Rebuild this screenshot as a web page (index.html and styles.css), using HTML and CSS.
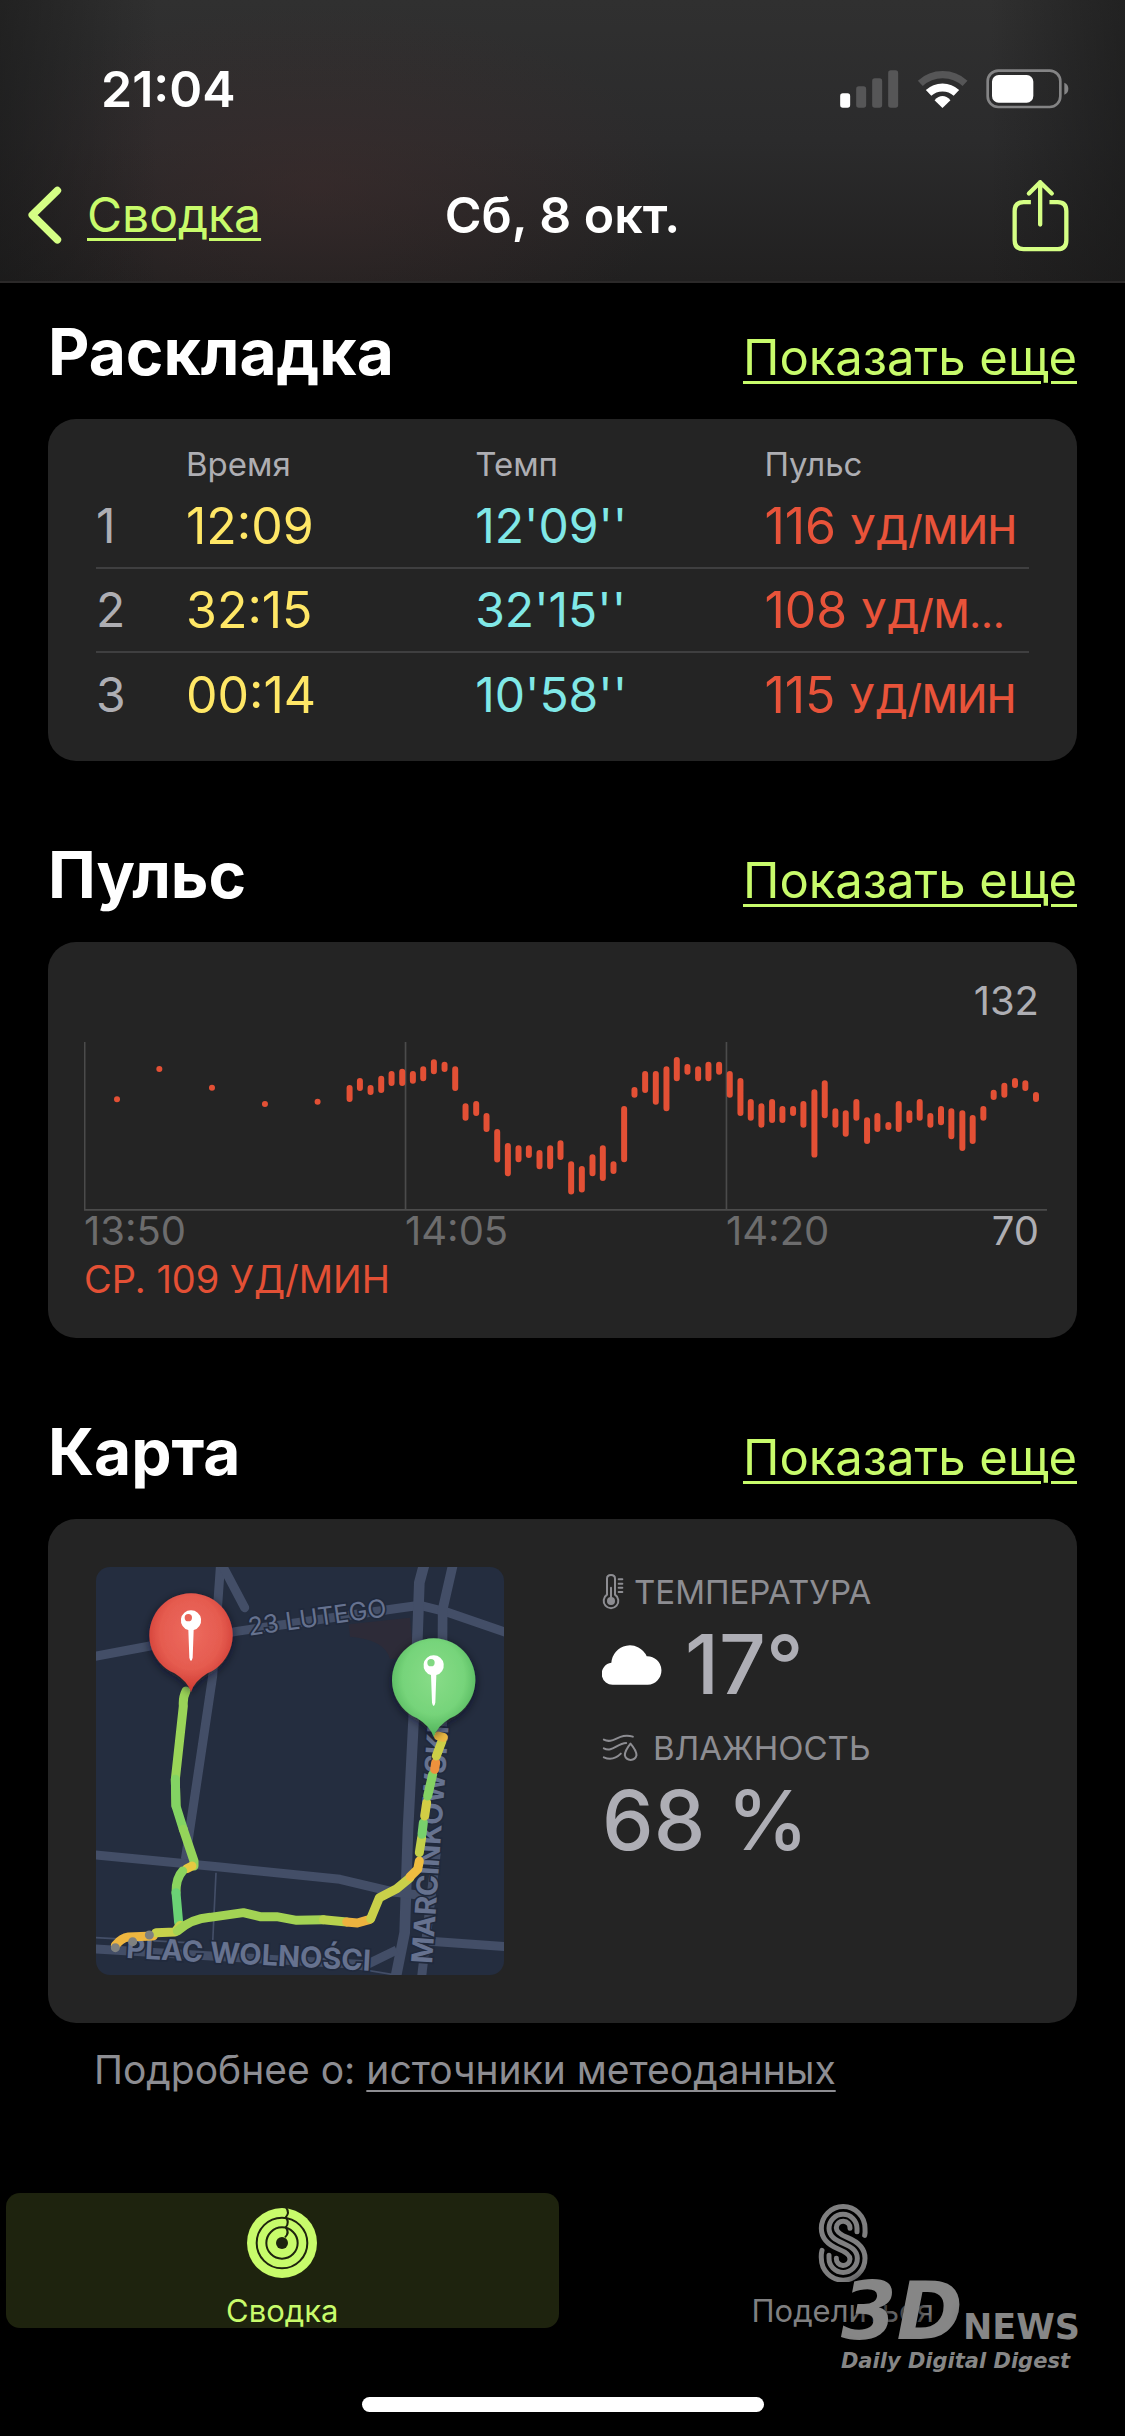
FILE: index.html
```html
<!DOCTYPE html>
<html lang="ru">
<head>
  <meta charset="utf-8">
  <meta name="viewport" content="width=device-width, initial-scale=1">
  <title>Сб, 8 окт.</title>
  <link rel="stylesheet" href="styles.css">
</head>
<body>
  <header class="header">
    <div class="status">
      <span class="status-time">21:04</span>
      <div class="status-icons">
        <svg class="icon-signal" viewBox="60 58 176 114" aria-hidden="true">
          <rect x="60" y="128" width="30" height="43" rx="8" fill="#fff"/>
          <g fill="#565657">
            <rect x="108" y="107" width="30" height="64" rx="8"/>
            <rect x="156" y="83" width="30" height="88" rx="8"/>
            <rect x="204" y="59" width="30" height="112" rx="8"/>
          </g>
        </svg>
        <svg class="icon-wifi" viewBox="290 58 154 114" aria-hidden="true">
          <g fill="none">
            <path d="M300 98A100 100 0 0 1 435 98" stroke="#565657" stroke-width="22"/>
            <path d="M325 127A61 61 0 0 1 409 127" stroke="#fff" stroke-width="24"/>
          </g>
          <path d="M367 172L343 149Q367 124 391 149Z" fill="#fff"/>
        </svg>
        <svg class="icon-battery" viewBox="500 56 249 120" aria-hidden="true">
          <rect x="505" y="61" width="218" height="109" rx="32" fill="none" stroke="#848485" stroke-width="8"/>
          <rect x="518" y="74" width="124" height="83" rx="20" fill="#fff"/>
          <path d="M735 97Q747 102 747 115Q747 128 735 133Z" fill="#848485"/>
        </svg>
      </div>
    </div>
    <nav class="nav">
      <a class="back" href="#summary">
        <svg class="icon-back" viewBox="50 410 106 174" aria-hidden="true">
          <path d="M142 423L66 497L142 572" fill="none" stroke="currentColor" stroke-width="23" stroke-linecap="round" stroke-linejoin="round"/>
        </svg>
        <span class="back-text">Сводка</span>
      </a>
      <h1 class="nav-title">Сб, 8 окт.</h1>
      <button class="share" type="button" aria-label="Поделиться">
        <svg class="icon-share" viewBox="575 382 172 219" aria-hidden="true">
          <g fill="none" stroke="currentColor" stroke-width="13">
            <path d="M632 451H610Q583 451 583 478V566Q583 593 610 593H713Q739 593 739 566V478Q739 451 713 451H688"/>
            <path d="M660 519V391M626 425L660 391L695 425" stroke-linecap="round" stroke-linejoin="round"/>
          </g>
        </svg>
      </button>
    </nav>
  </header>

  <main class="content">
    <section class="section">
      <div class="section-head">
        <h2 class="section-title">Раскладка</h2>
        <a class="more" href="#splits">Показать еще</a>
      </div>
      <div class="card card-splits">
        <table class="splits">
          <thead>
            <tr><th class="col-num"></th><th class="col-wide">Время</th><th class="col-wide">Темп</th><th>Пульс</th></tr>
          </thead>
          <tbody>
            <tr><td class="num">1</td><td class="time">12:09</td><td class="pace">12'09''</td><td class="pulse">116 <span class="unit">уд/мин</span></td></tr>
            <tr><td class="num">2</td><td class="time">32:15</td><td class="pace">32'15''</td><td class="pulse">108 <span class="unit">уд/м…</span></td></tr>
            <tr><td class="num">3</td><td class="time">00:14</td><td class="pace">10'58''</td><td class="pulse">115 <span class="unit">уд/мин</span></td></tr>
          </tbody>
        </table>
      </div>
    </section>

    <section class="section">
      <div class="section-head">
        <h2 class="section-title">Пульс</h2>
        <a class="more" href="#pulse">Показать еще</a>
      </div>
      <div class="card card-pulse">
        <div class="chart-max">132</div>
        <svg class="chart" viewBox="40 33 2890 507" role="img" aria-label="Пульс">
          <g fill="none" stroke="#4b4b4b" stroke-width="5">
            <path d="M42 33V537H2930M1005 33V537M1968 33V537"/>
          </g>
          <g fill="none" stroke="#e35035" stroke-width="18" stroke-linecap="round">
            <path d="M139 205h.1M266 114h.1M424 170h.1M583 219h.1M741 212h.1"/>
            <path d="M837 171V204M868 150V171M900 171V183M932 143V177M963 129V156M995 122V156M1027 129V149M1058 115V142M1090 94V121M1122 101V114M1154 115V171M1185 226V260M1217 219V246M1248 255V294M1280 303V386M1312 345V427M1344 352V385M1375 352V372M1407 366V406M1439 352V406M1470 337V378"/>
            <path d="M1502 400V482M1534 414V476M1566 379V427M1597 352V441M1629 400V420M1661 234V385M1692 177V191M1724 129V177M1756 129V212M1788 115V232M1819 87V142M1851 108V122M1883 115V142M1914 101V142M1946 101V122M1978 129V191M2010 150V246M2041 213V260M2073 226V281M2105 213V267M2136 234V267M2168 234V246M2199 219V281"/>
            <path d="M2232 184V371M2263 157V253M2295 241V281M2326 247V308M2358 213V260M2390 268V330M2421 255V294M2454 282V288M2485 219V294M2517 247V267M2548 213V260M2580 255V281M2612 234V274M2643 241V316M2676 247V351M2707 261V330M2739 234V260M2770 185V198M2802 164V191M2834 150V162M2865 157V171M2897 192V204"/>
          </g>
        </svg>
        <div class="axis">
          <span>13:50</span>
          <span>14:05</span>
          <span class="axis-last">14:20 <span class="chart-min">70</span></span>
        </div>
        <div class="average">СР. 109 УД/МИН</div>
      </div>
    </section>

    <section class="section">
      <div class="section-head">
        <h2 class="section-title">Карта</h2>
        <a class="more" href="#map">Показать еще</a>
      </div>
      <div class="card card-map">
        <svg class="map" viewBox="48 53 1224 1224" role="img" aria-label="Маршрут">
          <defs>
            <radialGradient id="pin-red" cx=".5" cy=".4" r=".62"><stop offset="0" stop-color="#ed6b5f"/><stop offset=".6" stop-color="#e55b4f"/><stop offset="1" stop-color="#cb352d"/></radialGradient>
            <radialGradient id="pin-green" cx=".5" cy=".4" r=".62"><stop offset="0" stop-color="#88dc88"/><stop offset=".6" stop-color="#76d47a"/><stop offset="1" stop-color="#4aad55"/></radialGradient>
            <filter id="pin-shadow" x="-30%" y="-30%" width="160%" height="160%"><feDropShadow dx="0" dy="8" stdDeviation="14" flood-color="#0c111c" flood-opacity=".65"/></filter>
            <path id="pin" d="M333 428Q323 396 284 372A125 125 0 1 1 382 372Q343 396 333 428Z"/>
            <g id="needle"><path fill="#fff" fill-rule="evenodd" d="M333 183A30 30 0 0 1 341 242L338 325Q333 345 328 325L325 242A30 30 0 0 1 333 183ZM325 194A11 11 0 1 0 325 216A11 11 0 1 0 325 194Z"/></g>
          </defs>
          <rect x="48" y="53" width="1224" height="1224" fill="#242d3f"/>
          <path d="M806 225L990 205L1000 320L930 330Q915 270 810 262Z" fill="#2d2b38"/>
          <g fill="none" stroke="#434e67" stroke-width="27" stroke-linejoin="round">
            <path d="M30 324L210 290L470 246L960 176L1020 168L1100 188L1280 250"/>
            <path d="M422 40L398 380L316 930"/>
            <path d="M428 50L494 175" stroke-linecap="round"/>
            <path d="M1034 40L1018 100L1010 330L984 840L974 1150L948 1280" stroke-width="32"/>
            <path d="M1120 40L1088 180L1086 560" stroke-width="29"/>
            <path d="M30 915L420 953L780 990L940 1028L1040 1040"/>
            <path d="M30 1198L480 1225L860 1246L950 1202"/>
            <path d="M1040 1175L1280 1192"/>
            <path d="M1070 900L1024 1290"/>
            <path d="M408 970L398 1180M30 1164L320 1180M820 1256L940 1276" stroke-width="5"/>
          </g>
          <g class="map-label">
            <text class="map-label-thin" transform="translate(508 259) rotate(-8)">23 LUTEGO</text>
            <text class="map-label-bold" transform="translate(137 1226) rotate(3)">PLAC WOLNOŚCI</text>
            <text class="map-label-bold" transform="translate(1056 1245) rotate(-86)">MARCINKOWSKI</text>
          </g>
          <g fill="none" stroke-width="27" stroke-linecap="round" stroke-linejoin="round">
            <path d="M318 425Q308 445 310 470L286 690L288 770" stroke="#9ad458"/>
            <path d="M286 690L288 770L310 840" stroke="#83d363"/>
            <path d="M310 840L342 935V950" stroke="#94d45a"/>
            <path d="M336 950L320 958" stroke="#e6c941"/>
            <path d="M308 965Q288 985 288 1030" stroke="#8bd45e"/>
            <path d="M288 1030L296 1120" stroke="#6bd275"/>
            <path d="M106 1188Q125 1165 145 1163L220 1160" stroke="#eeb640"/>
            <path d="M228 1150L285 1148L300 1128" stroke="#c6d14b"/>
            <path d="M292 1145Q335 1108 390 1104L490 1090L540 1102L590 1102L650 1113L730 1111" stroke="#a3d354"/>
            <path d="M730 1111L800 1118" stroke="#b9d24d"/>
            <path d="M800 1118L832 1121L870 1110" stroke="#edb33f"/>
            <path d="M872 1108L898 1045L950 1018L990 985" stroke="#c9d049"/>
            <path d="M990 982L1013 960L1018 935" stroke="#efbd40"/>
            <path d="M1018 910L1025 865" stroke="#c3d04a"/>
            <path d="M1026 855L1030 820" stroke="#78d16c"/>
            <path d="M1034 800L1040 760" stroke="#d2cd45"/>
            <path d="M1043 740L1058 675" stroke="#84d163"/>
            <path d="M1064 660L1067 640" stroke="#ed913d"/>
            <path d="M1069 620L1086 575" stroke="#cccf47"/>
            <path d="M1075 560L1090 564" stroke="#ecb943"/>
            <path d="M106 1195h.1M158 1177h.1M208 1157h.1" stroke="#7f8180"/>
          </g>
          <g filter="url(#pin-shadow)"><use href="#pin" fill="url(#pin-red)"/></g>
          <use href="#needle"/>
          <g transform="translate(728 135)">
            <g filter="url(#pin-shadow)"><use href="#pin" fill="url(#pin-green)"/></g>
            <use href="#needle"/>
          </g>
        </svg>
        <dl class="weather">
          <dt class="weather-label">
            <svg class="icon-thermo" viewBox="130 80 66 108" aria-hidden="true">
              <g fill="none" stroke="currentColor" stroke-width="6" stroke-linecap="round">
                <path d="M145 142V94Q145 83 157 83Q169 83 169 94V142A22 22 0 1 1 145 142Z"/>
                <path d="M157 121V155M180 96H191M180 109H191M180 121H191M180 134H191"/>
              </g>
              <circle cx="157" cy="161" r="12" fill="currentColor"/>
            </svg>
            ТЕМПЕРАТУРА
          </dt>
          <dd class="weather-value">
            <svg class="icon-cloud" viewBox="131 288 182 121" aria-hidden="true">
              <path d="M166 408H268A43 43 0 0 0 265 322A56 56 0 0 0 158 342A33 33 0 0 0 166 408Z" fill="#fff"/>
            </svg>
            17°
          </dd>
          <dt class="weather-label weather-label-humidity">
            <svg class="icon-humidity" viewBox="130 560 110 90" aria-hidden="true">
              <g fill="none" stroke="currentColor" stroke-width="6" stroke-linecap="round" stroke-linejoin="round">
                <path d="M135 580C165 595 180 558 222 571M135 606C160 619 174 591 202 590M135 633C155 642 170 638 186 622"/>
                <path d="M215 592Q198 613 198 627A18 18 0 0 0 233 627Q233 613 215 592Z"/>
              </g>
            </svg>
            ВЛАЖНОСТЬ
          </dt>
          <dd class="weather-value">68 %</dd>
        </dl>
      </div>
      <p class="source">Подробнее о: <a href="#weather-source">источники метеоданных</a></p>
    </section>
  </main>

  <footer class="footer">
    <nav class="tabs">
      <a class="tab tab-active" href="#summary">
        <svg class="icon-rings" viewBox="68 42 234 234" aria-hidden="true">
          <circle cx="185" cy="159" r="105" fill="currentColor"/>
          <g fill="none" stroke="#1e230e" stroke-width="6">
            <circle cx="185" cy="159" r="76"/>
            <circle cx="185" cy="159" r="47"/>
            <path d="M197 52Q209 68 196 82Q209 97 196 112Q209 128 194 142"/>
          </g>
          <circle cx="185" cy="159" r="18" fill="#1e230e"/>
        </svg>
        Сводка
      </a>
      <a class="tab" href="#sharing">
        <svg class="icon-sharing" viewBox="195 42 234 234" aria-hidden="true">
          <g fill="none" stroke="currentColor" stroke-width="15" stroke-linecap="round">
            <path d="M377 136Q379 128 378 115A65 65 0 0 0 247 115C247 148 268 165 298 177Q333 191 333 207A20 20 0 0 1 292 205"/>
            <path d="M354 125V115A42 42 0 0 0 270 115C270 140 290 150 312 160S355 180 355 205A42 42 0 0 1 270 205V196"/>
            <path d="M333 115A20 20 0 0 0 292 113Q291 129 326 143C360 157 378 175 378 205A65 65 0 0 1 247 205Q246 192 249 181"/>
          </g>
        </svg>
        Поделиться
      </a>
    </nav>
    <div class="watermark">
      <div class="watermark-top"><span class="watermark-big">3D</span><span class="watermark-news">NEWS</span></div>
      <div class="watermark-sub">Daily Digital Digest</div>
    </div>
    <div class="home-bar"></div>
  </footer>
</body>
</html>
```
FILE: styles.css
```css
* {
  box-sizing: border-box;
}

body {
  display: flex;
  flex-direction: column;
  min-height: 100vh;
  margin: 0;
  background: #000;
  color: #fff;
  font-family: Inter, "Liberation Sans", sans-serif;
}

h1, h2, p, dl, dd {
  margin: 0;
}

svg {
  display: block;
  flex: none;
}

/* Header */
.header {
  padding: 59px 56px 28px 27px;
  border-bottom: 2px solid #2b2929;
  background:
    linear-gradient(90deg, rgba(24, 24, 24, .6), transparent 14%, transparent 88%, rgba(24, 24, 24, .6)),
    radial-gradient(ellipse 32% 64% at 28% 66%, rgba(66, 44, 44, .5), transparent),
    linear-gradient(#303030, #2b2b2c 50%, #212020);
}

.status {
  display: flex;
  align-items: center;
  justify-content: space-between;
  height: 60px;
  padding-left: 74px;
}

.status-time {
  font-size: 50px;
  font-weight: 600;
  line-height: 60px;
}

.status-icons {
  display: flex;
  align-items: center;
  gap: 18px;
}

.icon-signal { width: 59px; height: 38px; }
.icon-wifi { width: 51px; height: 38px; }
.icon-battery { width: 83px; height: 40px; }

.nav {
  display: grid;
  grid-template-columns: 1fr auto 1fr;
  align-items: center;
  height: 76px;
  margin-top: 58px;
  margin-right: -29px;
  color: #d5ff85;
}

.back {
  display: flex;
  align-items: center;
  gap: 25px;
  color: #d5ff85;
  font-size: 48px;
  line-height: 60px;
  text-decoration: none;
}

.back-text {
  color: #c8fb6b;
  text-decoration: underline 3px;
  text-underline-offset: 6px;
}

.icon-back { width: 35px; height: 58px; }

.nav-title {
  color: #fff;
  font-size: 50px;
  font-weight: 600;
  line-height: 60px;
}

.share {
  justify-self: end;
  margin-right: 29px;
  padding: 0;
  border: 0;
  background: none;
  color: inherit;
}

.icon-share { width: 57px; height: 73px; }

/* Sections */
.content {
  flex: 1;
  padding: 29px 48px 0;
}

.section {
  margin-bottom: 74px;
}

.section-head {
  display: flex;
  align-items: baseline;
  justify-content: space-between;
  margin-bottom: 21px;
  line-height: 80px;
}

.section-title {
  font-size: 64px;
  font-weight: 700;
}

.more {
  color: #c8fb6b;
  font-size: 49px;
  text-decoration: underline 3px;
  text-underline-offset: 6px;
}

.card {
  border-radius: 28px;
  background: #242424;
}

/* Splits */
.card-splits {
  padding: 0 48px 25px;
}

.splits {
  width: 100%;
  border-collapse: collapse;
  table-layout: fixed;
  white-space: nowrap;
}

.splits th {
  height: 65px;
  padding: 25px 0 0;
  color: #aeaeb3;
  font-size: 33px;
  font-weight: 400;
  line-height: 40px;
  text-align: left;
}

.splits .col-num { width: 90px; }
.splits .col-wide { width: 31%; }

.splits td {
  height: 84px;
  padding: 0;
  font-size: 48px;
  line-height: 60px;
}

.splits tbody tr + tr {
  border-top: 2px solid #3f3f40;
}

.num { color: #aeaeb3; }
.pace { color: #80e8e7; }

.splits .time {
  color: #ffe766;
  font-size: 50px;
}

.splits .pulse {
  color: #e8533a;
  font-size: 50px;
}

.unit {
  font-size: 39px;
  font-weight: 500;
  line-height: 40px;
  text-transform: uppercase;
}

/* Pulse */
.card-pulse {
  padding: 35px 30px 35px 36px;
  font-size: 40px;
}

.chart-max {
  margin-bottom: 17px;
  padding-right: 8px;
  color: #aeaeb3;
  line-height: 48px;
  text-align: right;
}

.chart {
  width: 100%;
  height: auto;
}

.axis {
  display: grid;
  grid-template-columns: repeat(3, 1fr);
  color: #6c6c6d;
  line-height: 40px;
}

.axis-last {
  display: flex;
  justify-content: space-between;
  padding-right: 8px;
}

.chart-min {
  color: #aeaeb3;
}

.average {
  margin-top: 4px;
  color: #e35035;
  font-size: 38px;
  line-height: 48px;
}

/* Map */
.card-map {
  display: flex;
  gap: 98px;
  padding: 48px;
}

.map {
  width: 408px;
  height: 408px;
  border-radius: 14px;
}

.map-label {
  fill: #66728f;
  stroke: #20293c;
  stroke-width: 10px;
  paint-order: stroke;
}

.map-label-thin { font-size: 75px; }
.map-label-bold { font-size: 87px; font-weight: 700; }

.weather-label {
  display: flex;
  align-items: center;
  gap: 10px;
  color: #8d8d92;
  font-size: 33px;
  line-height: 50px;
}

.weather-label-humidity {
  gap: 14px;
  margin-top: 10px;
}

.weather-value {
  display: flex;
  align-items: center;
  gap: 22px;
  color: #aeaeb5;
  font-size: 82px;
  font-weight: 500;
  line-height: 96px;
}

.icon-thermo { width: 22px; height: 36px; }
.icon-humidity { width: 37px; height: 30px; }
.icon-cloud { width: 61px; height: 40px; }

.source {
  margin-top: 23px;
  padding-left: 46px;
  color: #8d8d92;
  font-size: 39px;
  line-height: 48px;
}

.source a {
  color: inherit;
  text-decoration: underline 2px;
  text-underline-offset: 6px;
}

/* Tab bar */
.footer {
  position: relative;
  padding-bottom: 24px;
}

.tabs {
  display: grid;
  grid-template-columns: 1fr 1fr;
  gap: 8px;
  padding: 0 6px;
}

.tab {
  display: flex;
  flex-direction: column;
  align-items: center;
  gap: 12px;
  height: 135px;
  padding-top: 11px;
  border-radius: 14px;
  color: #7f7f80;
  font-size: 31px;
  line-height: 34px;
  text-decoration: none;
}

.tab-active {
  background: #1e230e;
  color: #c8fb6b;
}

.icon-rings, .icon-sharing { width: 78px; height: 78px; }

.home-bar {
  width: 402px;
  height: 15px;
  margin: 69px auto 0;
  border-radius: 8px;
  background: #fff;
}

.watermark {
  position: absolute;
  right: 45px;
  bottom: 64px;
  color: #868686;
  font-family: "DejaVu Sans", sans-serif;
  font-weight: 700;
  text-shadow: 0 0 14px #000;
}

.watermark-top {
  display: flex;
  align-items: baseline;
  justify-content: flex-end;
  line-height: 46px;
}

.watermark-big {
  font-size: 80px;
  font-style: italic;
}

.watermark-news {
  font-size: 35px;
}

.watermark-sub {
  font-size: 21px;
  font-style: italic;
  line-height: 22px;
}
```
